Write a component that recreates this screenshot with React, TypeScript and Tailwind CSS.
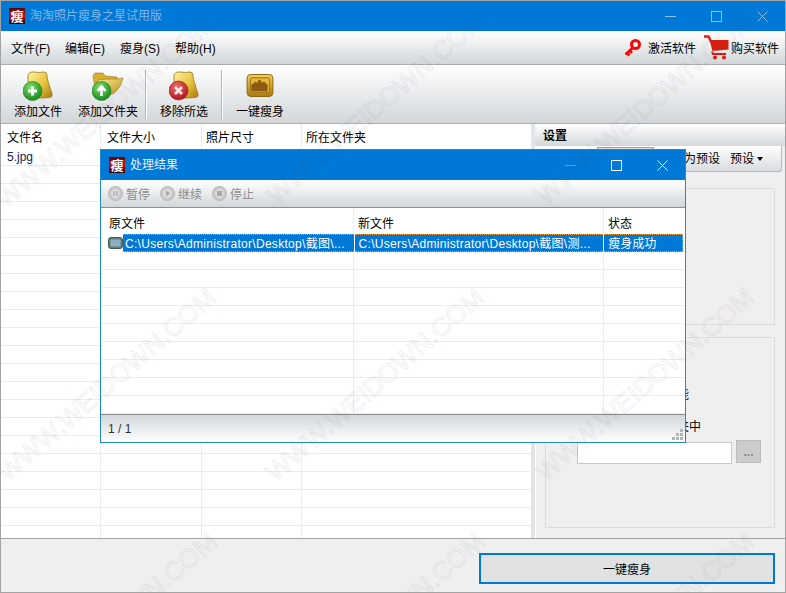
import { useId } from "react";

const barGradient = "bg-gradient-to-b from-[#ffffff] to-[#d3d7da]";

// grid lines behind the file list and the result list
const Rows = ({ count, className }: { count: number; className: string }) => (
  <>
    {Array.from({ length: count }).map((_, i) => (
      <div key={i} className={`h-[18px] shrink-0 border-b border-[#ececec] ${className}`} />
    ))}
  </>
);

const AppIcon = () => (
  <div className="w-4 h-4 shrink-0 bg-gradient-to-b from-[#5a0505] via-[#d01010] to-[#200000] flex items-center justify-center overflow-hidden">
    <span className="text-white text-[13px] leading-none font-bold">瘦</span>
  </div>
);

const WinControls = ({ dim }: { dim: boolean }) => {
  const color = dim ? "#8fc0ea" : "#ffffff";
  return (
    <div className="ml-auto flex items-center h-full">
      <div className="w-[46px] flex justify-center">
        <svg width="11" height="11" viewBox="0 0 11 11">
          <path d="M0 5.5h11" stroke={dim ? "#8fc0ea" : "#4c9fe4"} fill="none" />
        </svg>
      </div>
      <div className="w-[46px] flex justify-center">
        <svg width="11" height="11" viewBox="0 0 11 11">
          <rect x="0.5" y="0.5" width="10" height="10" stroke={color} fill="none" />
        </svg>
      </div>
      <div className="w-[46px] flex justify-center">
        <svg width="11" height="11" viewBox="0 0 11 11">
          <path d="M0.5 0.5l10 10M10.5 0.5l-10 10" stroke={color} fill="none" />
        </svg>
      </div>
    </div>
  );
};

const GoldDoc = () => {
  const id = useId();
  return (
    <>
      <defs>
        <linearGradient id={id} x1="0" y1="0" x2="1" y2="1">
          <stop offset="0" stopColor="#fff3a0" />
          <stop offset="0.55" stopColor="#e6c23c" />
          <stop offset="1" stopColor="#a87a10" />
        </linearGradient>
      </defs>
      <path
        d="M3 6C3 2 5 1 8 1c4 0 7 1 10 0 3 0 4 1 4 4 0 4 2 7 3 12 2 5 3 8 1 9-3 1-9 1-16 1H5C3 20 3 12 3 6z"
        fill={`url(#${id})`}
        stroke="#9a7414"
        strokeWidth="0.8"
      />
    </>
  );
};

const Badge = ({ cx, cy, from, to, children }: { cx: number; cy: number; from: string; to: string; children: React.ReactNode }) => {
  const id = useId();
  return (
    <>
      <defs>
        <radialGradient id={id} cx="0.4" cy="0.3" r="0.8">
          <stop offset="0" stopColor={from} />
          <stop offset="1" stopColor={to} />
        </radialGradient>
      </defs>
      <circle cx={cx} cy={cy} r="9.5" fill={`url(#${id})`} stroke={to} strokeWidth="0.6" />
      {children}
    </>
  );
};

const AddFileIcon = () => (
  <svg width="30" height="30" viewBox="0 0 30 30">
    <g transform="translate(2 0)">
      <GoldDoc />
    </g>
    <Badge cx={9.5} cy={20} from="#7fe06a" to="#0b7d16">
      <path d="M9.5 15.5v9M5 20h9" stroke="#ffffff" strokeWidth="3" />
    </Badge>
  </svg>
);

const AddFolderIcon = () => {
  const id = useId();
  return (
    <svg width="32" height="30" viewBox="0 0 32 30">
      <defs>
        <linearGradient id={id} x1="0" y1="0" x2="1" y2="1">
          <stop offset="0" stopColor="#fff0a0" />
          <stop offset="1" stopColor="#b98a14" />
        </linearGradient>
      </defs>
      <path d="M1 5l2-3 8 0 2 3 12 1 0 6L4 22z" fill="#d9b02e" stroke="#9a7414" strokeWidth="0.6" />
      <path d="M6 9c6-1 12-1 17-1 3 0 6-1 8-1-1 4-3 9-6 12-2 3-6 5-11 6L4 24z" fill={`url(#${id})`} stroke="#9a7414" strokeWidth="0.6" />
      <Badge cx={9.5} cy={20} from="#7fe06a" to="#0b7d16">
        <path d="M9.5 25v-9M5.5 20l4-4.5 4 4.5" stroke="#ffffff" strokeWidth="2.6" fill="none" />
      </Badge>
    </svg>
  );
};

const RemoveIcon = () => (
  <svg width="30" height="30" viewBox="0 0 30 30">
    <g transform="translate(2 0)">
      <GoldDoc />
    </g>
    <Badge cx={9.5} cy={19.5} from="#f06a6a" to="#a80c14">
      <path d="M6 16l7 7M13 16l-7 7" stroke="#ffe8e8" strokeWidth="2.8" />
    </Badge>
  </svg>
);

const SlimIcon = () => {
  const id = useId();
  return (
    <svg width="28" height="23" viewBox="0 0 28 24" className="mb-[4px]">
      <defs>
        <linearGradient id={id} x1="0" y1="0" x2="0" y2="1">
          <stop offset="0" stopColor="#f4d060" />
          <stop offset="1" stopColor="#a87a10" />
        </linearGradient>
      </defs>
      <rect x="0.5" y="0.5" width="27" height="23" rx="4" fill={`url(#${id})`} stroke="#8a6410" />
      <rect x="4" y="4" width="20" height="15" rx="1.5" fill="#e8b73a" stroke="#9a7010" />
      <path
        d="M5 18v-6c0-1 1-2 2-2s1-2 2-2 2 1 2 2l1-3c0-1 3-1 3 0l1 3c0-1 1-2 2-2s2 1 2 2c1 0 2 1 2 2v6z"
        fill="#8c5a10"
      />
    </svg>
  );
};

const KeyIcon = () => (
  <svg width="17" height="18" viewBox="0 0 17 18">
    <circle cx="11.5" cy="5.5" r="4" fill="none" stroke="#f00a0a" strokeWidth="3" />
    <path d="M9 8.5L1.5 15.5M3 14l2.5 2.5M5.5 11.5l2.5 2.5" stroke="#f00a0a" strokeWidth="2.6" fill="none" />
  </svg>
);

const CartIcon = () => (
  <svg width="25" height="25" viewBox="0 0 25 25">
    <path d="M0 1.5h4.5l2.5 5" stroke="#d81e10" strokeWidth="2.4" fill="none" />
    <path d="M5.5 5h19v9.5l-16 1.5z" fill="#d81e10" />
    <path d="M8 16.5l1 2.5h13" stroke="#d81e10" strokeWidth="2" fill="none" />
    <circle cx="11" cy="22.5" r="2" fill="#d81e10" />
    <circle cx="20" cy="22.5" r="2" fill="#d81e10" />
  </svg>
);

const ToolButton = ({ icon, label, className }: { icon: React.ReactNode; label: string; className: string }) => (
  <div className={`flex flex-col items-center shrink-0 ${className}`}>
    <div className="h-[33px] flex items-end justify-center">{icon}</div>
    <span className="mt-[3px] leading-[16px] whitespace-nowrap">{label}</span>
  </div>
);

const StepIcon = ({ kind }: { kind: "pause" | "play" | "stop" }) => (
  <svg width="15" height="15" viewBox="0 0 15 15">
    <circle cx="7.5" cy="7.5" r="7" fill="#c8c8c8" stroke="#b8b8b8" />
    <circle cx="7.5" cy="7.5" r="4.5" fill="#dcdcdc" />
    {kind === "pause" && <path d="M6 5v5M9 5v5" stroke="#a8a8a8" strokeWidth="1.3" />}
    {kind === "play" && <path d="M6 4.5l4 3-4 3z" fill="#a8a8a8" />}
    {kind === "stop" && <rect x="5" y="5" width="5" height="5" fill="#a8a8a8" />}
  </svg>
);

const SourceFileIcon = () => (
  <svg width="15" height="12" viewBox="0 0 15 12" className="shrink-0">
    <rect x="0.5" y="0.5" width="14" height="11" rx="2.5" fill="#5f7f78" stroke="#3f5a55" />
    <rect x="2.5" y="2.5" width="10" height="7" rx="1" fill="#8fb0c4" />
  </svg>
);

// faint diagonal site mark laid over the whole window
const watermarks = [
  "left-[104px] top-[111px]",
  "left-[375px] top-[107px]",
  "left-[644px] top-[107px]",
  "left-[106px] top-[384px]",
  "left-[374px] top-[384px]",
  "left-[644px] top-[384px]",
  "left-[107px] top-[628px]",
  "left-[375px] top-[628px]",
  "left-[644px] top-[628px]",
];

const ResultDialog = () => (
  <div className="absolute left-[99px] top-[148px] w-[586px] h-[294px] border border-[#1f88d8] bg-white flex flex-col">
    <div className="h-[30px] shrink-0 bg-[#0078d7] flex items-center pl-[8px] text-[#e6f1fb]">
      <AppIcon />
      <span className="ml-[5px]">处理结果</span>
      <WinControls dim={false} />
    </div>
    <div className={`h-[28px] shrink-0 ${barGradient} border-b border-[#8a8f94] flex items-center pl-[7px] text-[#8c8c8c]`}>
      <StepIcon kind="pause" />
      <span className="ml-[3px] w-[34px] pt-[2px]">暂停</span>
      <StepIcon kind="play" />
      <span className="ml-[3px] w-[34px] pt-[2px]">继续</span>
      <StepIcon kind="stop" />
      <span className="ml-[3px] pt-[2px]">停止</span>
    </div>
    <div className="h-[206px] shrink-0 mx-px flex flex-col overflow-hidden bg-white">
      <div className="h-[26px] shrink-0 flex items-center">
        <div className="w-[252px] pl-[7px] pt-[5px] h-full flex items-center border-r border-[#ececec]">原文件</div>
        <div className="w-[250px] pl-[4px] pt-[5px] h-full flex items-center border-r border-[#ececec]">新文件</div>
        <div className="pl-[4px] pt-[5px]">状态</div>
      </div>
      <div className="h-[18px] shrink-0 flex w-[581px] pl-[6px]">
        <div className="flex items-center w-[15px] shrink-0">
          <SourceFileIcon />
        </div>
        <div className="w-[231px] bg-[#0078d7] text-white border-y border-dotted border-[#f0a040] whitespace-nowrap overflow-hidden flex items-center pl-[2px] pt-[2px] tracking-[0.3px]">
          C:\Users\Administrator\Desktop\截图\...
        </div>
        <div className="w-[249px] ml-px bg-[#0078d7] text-white border-y border-dotted border-[#f0a040] whitespace-nowrap overflow-hidden flex items-center pl-[4px] pt-[2px] tracking-[0.3px]">
          C:\Users\Administrator\Desktop\截图\测...
        </div>
        <div className="w-[79px] ml-px bg-[#0078d7] text-white border-y border-r border-dotted border-[#f0a040] whitespace-nowrap flex items-center pl-[4px] pt-[2px]">
          瘦身成功
        </div>
      </div>
      <div className="relative grow flex flex-col">
        <Rows count={9} className="w-full" />
        <div className="absolute left-[251px] top-0 bottom-0 w-px bg-[#ececec]" />
        <div className="absolute left-[501px] top-0 bottom-0 w-px bg-[#ececec]" />
      </div>
    </div>
    <div className="grow bg-gradient-to-b from-[#d3d7da] to-[#ffffff] border-t border-[#8a8f94] flex items-center pl-[7px] relative text-[#333]">
      <span>1 / 1</span>
      <svg width="12" height="12" viewBox="0 0 12 12" className="absolute right-px bottom-px">
        <path d="M8 0h3v3H8zM4 4h3v3H4zM8 4h3v3H8zM0 8h3v3H0zM4 8h3v3H4zM8 8h3v3H8z" fill="#b4b4b4" />
      </svg>
    </div>
  </div>
);

const FileList = () => (
  <div className="w-[530px] shrink-0 bg-white flex flex-col relative overflow-hidden">
    <div className="h-[24px] shrink-0 flex items-center pt-[3px]">
      <div className="w-[100px] pl-[6px]">文件名</div>
      <div className="w-[100px] pl-[6px]">文件大小</div>
      <div className="w-[100px] pl-[5px]">照片尺寸</div>
      <div className="pl-[5px]">所在文件夹</div>
    </div>
    <div className="h-[18px] shrink-0 border-b border-[#ececec] pl-[6px] flex items-center text-[#12254a]">5.jpg</div>
    <Rows count={21} className="w-full" />
    <div className="absolute left-[99px] top-0 bottom-0 w-px bg-[#ececec]" />
    <div className="absolute left-[200px] top-0 bottom-0 w-px bg-[#ececec]" />
    <div className="absolute left-[300px] top-0 bottom-0 w-px bg-[#ececec]" />
  </div>
);

const SettingsPanel = () => (
  <div className="grow flex flex-col min-w-0 border-l-[4px] border-[#e2e5e7]">
    <div className={`h-[22px] shrink-0 ${barGradient} pl-[8px] pt-[2px] flex items-center font-bold`}>设置</div>
    <div className="h-[26px] shrink-0 mr-[3px] rounded-b-[3px] bg-gradient-to-b from-[#ffffff] to-[#d9dcdf] border-b border-r border-[#b5b8bb] flex items-center justify-end pr-[18px] relative">
      <div className="absolute left-[62px] top-px w-[57px] h-[8px] border border-[#a8a08a] bg-[#e8e0c8]" />
      <span>存为预设</span>
      <span className="ml-[10px]">预设</span>
      <span className="ml-[3px] w-0 h-0 border-x-[3px] border-x-transparent border-t-[4px] border-t-black" />
    </div>
    <div className="grow flex flex-col pl-[9px] pr-[10px] pt-[16px] pb-[10px] border-l border-white">
      <div className="h-[137px] shrink-0 border border-[#dcdcdc] pl-[136px] pt-[13px]">
        <div className="leading-[14px]">]</div>
      </div>
      <div className="grow mt-[12px] border border-[#dcdcdc] flex flex-col pt-[50px]">
        <div className="pl-[131px] leading-[14px]">能</div>
        <div className="pl-[131px] mt-[18px] leading-[14px] whitespace-nowrap">夹中</div>
        <div className="flex items-start mt-[8px] ml-[31px]">
          <div className="w-[155px] h-[22px] bg-white border border-[#c8c8c8]" />
          <div className="ml-[4px] -mt-[2px] w-[25px] h-[23px] bg-[#cccccc] border border-[#bdbdbd] text-[#8a8a8a] flex items-center justify-center font-bold">
            ...
          </div>
        </div>
      </div>
    </div>
  </div>
);

export default function App() {
  return (
    <div className="relative w-[786px] h-[593px] overflow-hidden bg-[#efefef] border border-[#a3a3a3] flex flex-col text-[12px] text-black font-['Liberation_Sans','Noto_Sans_CJK_SC',sans-serif]">
      {/* title bar */}
      <div className="h-[30px] shrink-0 bg-[#0078d7] flex items-center pl-[8px] text-[#7fb6e8]">
        <AppIcon />
        <span className="ml-[5px]">淘淘照片瘦身之星试用版</span>
        <WinControls dim />
      </div>

      {/* menu bar */}
      <div className={`h-[34px] shrink-0 ${barGradient} border-b border-[#adadad] flex items-center pl-[10px] pr-[6px]`}>
        <span className="w-[54px] pt-[2px]">文件(F)</span>
        <span className="w-[55px] pt-[2px]">编辑(E)</span>
        <span className="w-[55px] pt-[2px]">瘦身(S)</span>
        <span className="pt-[2px]">帮助(H)</span>
        <div className="ml-auto flex items-center">
          <KeyIcon />
          <span className="ml-[7px] mr-[8px] pt-[2px]">激活软件</span>
          <CartIcon />
          <span className="ml-[2px] pt-[2px]">购买软件</span>
        </div>
      </div>

      {/* toolbar */}
      <div className={`h-[59px] shrink-0 ${barGradient} border-b border-[#adadad] flex items-start pt-[3px]`}>
        <ToolButton icon={<AddFileIcon />} label="添加文件" className="w-[74px]" />
        <ToolButton icon={<AddFolderIcon />} label="添加文件夹" className="w-[66px]" />
        <div className="w-px h-[49px] ml-[4px] mt-[2px] bg-[#b4b8bb] border-r border-white box-content" />
        <ToolButton icon={<RemoveIcon />} label="移除所选" className="w-[74px]" />
        <div className="w-px h-[49px] mt-[2px] bg-[#b4b8bb] border-r border-white box-content" />
        <ToolButton icon={<SlimIcon />} label="一键瘦身" className="w-[74px]" />
      </div>

      {/* file list and settings */}
      <div className="h-[415px] shrink-0 flex border-b border-[#a3a3a3]">
        <FileList />
        <SettingsPanel />
      </div>

      {/* bottom action */}
      <div className="grow flex items-start justify-end pt-[14px] pr-[10px]">
        <div className="w-[296px] h-[31px] pt-[2px] bg-[#e1e1e1] border-2 border-[#0078d7] flex items-center justify-center">
          一键瘦身
        </div>
      </div>

      <ResultDialog />

      {watermarks.map((pos) => (
        <div
          key={pos}
          className={`absolute ${pos} -translate-x-1/2 -translate-y-1/2 -rotate-[41deg] pointer-events-none whitespace-nowrap text-[26px] text-transparent [-webkit-text-stroke:1px_rgba(90,90,90,0.11)]`}
        >
          WWW.WEIDOWN.COM
        </div>
      ))}
    </div>
  );
}
